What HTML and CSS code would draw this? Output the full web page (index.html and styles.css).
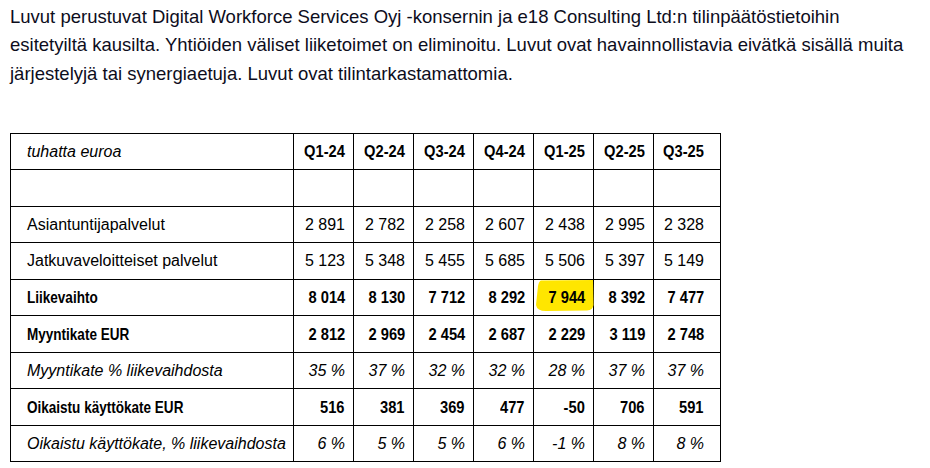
FILE: index.html
```html
<!DOCTYPE html>
<html lang="fi">
<head>
<meta charset="utf-8">
<title>Luvut</title>
<link rel="stylesheet" href="styles.css">
</head>
<body>
<p class="intro">Luvut perustuvat Digital Workforce Services Oyj -konsernin ja e18 Consulting Ltd:n tilinpäätöstietoihin<br>esitetyiltä kausilta. Yhtiöiden väliset liiketoimet on eliminoitu. Luvut ovat havainnollistavia eivätkä sisällä muita<br>järjestelyjä tai synergiaetuja. Luvut ovat tilintarkastamattomia.</p>
<table class="fin">
  <colgroup>
    <col class="c-label"><col class="c-num"><col class="c-num"><col class="c-num"><col class="c-num"><col class="c-num"><col class="c-num"><col class="c-last">
  </colgroup>
  <tr class="head">
    <td class="label it">tuhatta euroa</td>
    <td class="b"><span class="cn">Q1-24</span></td><td class="b"><span class="cn">Q2-24</span></td><td class="b"><span class="cn">Q3-24</span></td><td class="b"><span class="cn">Q4-24</span></td><td class="b"><span class="cn">Q1-25</span></td><td class="b"><span class="cn">Q2-25</span></td><td class="b"><span class="cn">Q3-25</span></td>
  </tr>
  <tr>
    <td class="label"></td><td></td><td></td><td></td><td></td><td></td><td></td><td></td>
  </tr>
  <tr>
    <td class="label">Asiantuntijapalvelut</td>
    <td>2 891</td><td>2 782</td><td>2 258</td><td>2 607</td><td>2 438</td><td>2 995</td><td>2 328</td>
  </tr>
  <tr>
    <td class="label">Jatkuvaveloitteiset palvelut</td>
    <td>5 123</td><td>5 348</td><td>5 455</td><td>5 685</td><td>5 506</td><td>5 397</td><td>5 149</td>
  </tr>
  <tr class="bold">
    <td class="label"><span class="cl">Liikevaihto</span></td>
    <td><span class="cn">8 014</span></td><td><span class="cn">8 130</span></td><td><span class="cn">7 712</span></td><td><span class="cn">8 292</span></td><td class="marked"><svg class="marker" viewBox="0 0 60 36" width="60" height="36" aria-hidden="true"><path d="M7,0.5 L59,0 L59.5,25 Q59,30 53,30.5 L12,31 Q3,31 2,25 L4,6 Q5,1 7,0.5 Z" fill="#ffe600"/></svg><span class="cn mtext">7 944</span></td><td><span class="cn">8 392</span></td><td><span class="cn">7 477</span></td>
  </tr>
  <tr class="bold">
    <td class="label"><span class="cl">Myyntikate EUR</span></td>
    <td><span class="cn">2 812</span></td><td><span class="cn">2 969</span></td><td><span class="cn">2 454</span></td><td><span class="cn">2 687</span></td><td><span class="cn">2 229</span></td><td><span class="cn">3 119</span></td><td><span class="cn">2 748</span></td>
  </tr>
  <tr class="it">
    <td class="label">Myyntikate % liikevaihdosta</td>
    <td>35 %</td><td>37 %</td><td>32 %</td><td>32 %</td><td>28 %</td><td>37 %</td><td>37 %</td>
  </tr>
  <tr class="bold">
    <td class="label"><span class="cl">Oikaistu käyttökate EUR</span></td>
    <td><span class="cn">516</span></td><td><span class="cn">381</span></td><td><span class="cn">369</span></td><td><span class="cn">477</span></td><td><span class="cn">-50</span></td><td><span class="cn">706</span></td><td><span class="cn">591</span></td>
  </tr>
  <tr class="it">
    <td class="label">Oikaistu käyttökate, % liikevaihdosta</td>
    <td>6 %</td><td>5 %</td><td>5 %</td><td>6 %</td><td>-1 %</td><td>8 %</td><td>8 %</td>
  </tr>
</table>
</body>
</html>
```
FILE: styles.css
```css
html, body {
  margin: 0;
  padding: 0;
  background: #ffffff;
}
body {
  padding: 0 10px;
  font-family: "Liberation Sans", Arial, sans-serif;
  color: #000;
}
.intro {
  margin: 3px 0 0 0;
  font-size: 18.5px;
  line-height: 28.3px;
  color: #0d0d1c;
  white-space: nowrap;
}
.fin {
  margin-top: 45px;
  border-collapse: collapse;
  table-layout: fixed;
  width: 710px;
  font-size: 16px;
}
.c-label { width: 283px; }
.c-num { width: 60px; }
.c-last { width: 67px; }
.fin td {
  border: 1px solid #000;
  height: 35.5px;
  padding: 0 8px 0 4px;
  text-align: right;
  vertical-align: middle;
  white-space: nowrap;
}
.fin td:last-child {
  padding-right: 16px;
}
.fin td.label {
  text-align: left;
  padding-left: 16px;
}
.it td, td.it {
  font-style: italic;
}
.b, .bold td {
  font-weight: bold;
  font-size: 16.5px;
}
.cn, .cl {
  display: inline-block;
}
.cn {
  transform: scaleX(0.89);
  transform-origin: right center;
}
.cl {
  transform: scaleX(0.82);
  transform-origin: left center;
}
.marked {
  position: relative;
}
.marker {
  position: absolute;
  left: 0;
  top: 0;
}
.mtext {
  position: relative;
}
```
